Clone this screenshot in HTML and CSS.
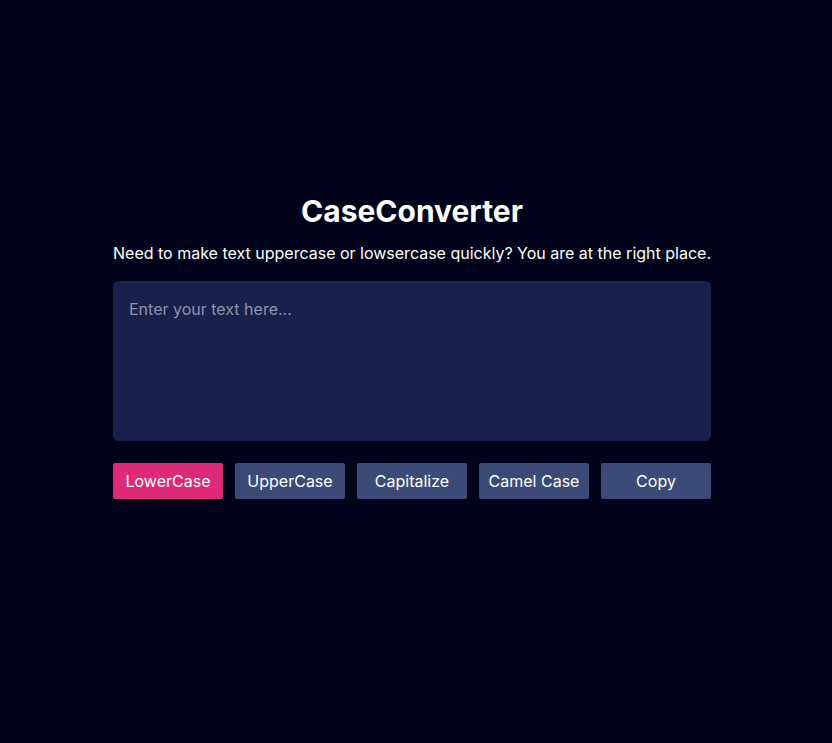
FILE: index.html
```html
<!DOCTYPE html>
<html lang="en">
<head>
<meta charset="utf-8">
<title>CaseConverter</title>
<link rel="stylesheet" href="styles.css">
</head>
<body>
<main class="app">
  <h1 class="title">CaseConverter</h1>
  <p class="subtitle">Need to make text uppercase or lowsercase quickly? You are at the right place.</p>
  <textarea class="input" placeholder="Enter your text here..."></textarea>
  <div class="actions">
    <button class="btn btn-active">LowerCase</button>
    <button class="btn">UpperCase</button>
    <button class="btn">Capitalize</button>
    <button class="btn">Camel Case</button>
    <button class="btn">Copy</button>
  </div>
</main>
</body>
</html>
```

FILE: styles.css
```css
* { box-sizing: border-box; }
html, body { margin: 0; padding: 0; }
body {
  background: #000319;
  color: #ffffff;
  font-family: Inter, "Noto Sans", sans-serif;
  min-height: 100vh;
  padding-right: 8px;
}
.app {
  width: 598px;
  margin: 0 auto;
  padding-top: 193px;
  display: flex;
  flex-direction: column;
  align-items: stretch;
}
.title {
  margin: 0;
  text-align: center;
  font-size: 30px;
  font-weight: 700;
  line-height: 36px;
}
.subtitle {
  margin: 12px 0 0;
  text-align: center;
  font-size: 16px;
  line-height: 24px;
}
.input {
  margin-top: 16px;
  height: 160px;
  width: 100%;
  resize: none;
  border: none;
  outline: none;
  border-radius: 6px;
  background: #19204b;
  color: #ffffff;
  padding: 16px;
  font-family: Inter, "Noto Sans", sans-serif;
  font-size: 16px;
  line-height: 24px;
}
.input::placeholder { color: #8b93b0; }
.actions {
  margin-top: 22px;
  display: grid;
  grid-template-columns: repeat(5, 1fr);
  gap: 12px;
}
.btn {
  height: 36px;
  border: none;
  border-radius: 2px;
  background: #3b4a76;
  color: #ffffff;
  font-family: Inter, "Noto Sans", sans-serif;
  font-size: 16px;
  cursor: pointer;
}
.btn-active { background: #df2a77; }
```
